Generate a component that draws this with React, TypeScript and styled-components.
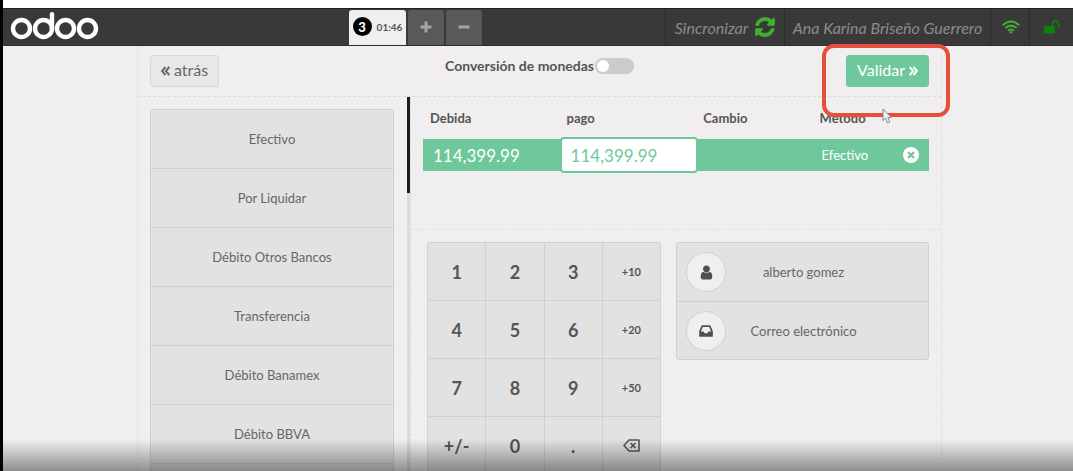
import React, { useState } from "react";
import styled, { createGlobalStyle, css } from "styled-components";

const green = "#6ec89b";
const line = "#d0d0d0";
const cell = "#e2e2e2";
const paper = "#f0eeef";

const GlobalStyle = createGlobalStyle`
  * { box-sizing: border-box; }
  body { margin: 0; background: ${paper}; color: #555555; font-family: Lato, "Open Sans", sans-serif; }
  button, input { font-family: inherit; color: inherit; margin: 0; }
  button { cursor: pointer; }
`;

const Screen = styled.div`
  position: relative;
  display: flex;
  flex-direction: column;
  height: 100vh;
  overflow: hidden;
  padding-top: 8px;
  border-left: 3px solid #000000;
  background: linear-gradient(#ffffff 8px, ${paper} 8px);
`;

const TopBar = styled.header`
  display: flex;
  flex: 0 0 37px;
  background: #393939;
  border-top: 1px solid #222222;
  border-bottom: 1px solid #2c2c2c;
`;

const Brand = styled.div`
  flex: 0 0 346px;
  padding: 2px 0 0 7px;
`;

const Tabs = styled.nav`
  display: flex;
  flex: 1;
  gap: 2px;
  padding-top: 1px;
`;

const Tab = styled.button<{ $active?: boolean }>`
  display: flex;
  align-items: center;
  justify-content: center;
  gap: 5px;
  height: 35px;
  padding: 0 0 2px;
  border: 0;
  border-radius: 3px 3px 0 0;
  width: 36px;
  background: #595959;
  color: #a5a5a5;
  ${(p) =>
    p.$active &&
    css`
      width: 57px;
      background: ${paper};
      color: #555555;
      font-size: 10px;
      font-weight: 700;
    `}
`;

const TabNumber = styled.span`
  display: grid;
  place-items: center;
  width: 19px;
  height: 19px;
  border-radius: 50%;
  background: #000000;
  color: #ffffff;
  font-size: 13px;
  font-weight: 900;
`;

const Status = styled.div<{ $width: number }>`
  display: flex;
  align-items: center;
  justify-content: center;
  gap: 7px;
  flex: 0 0 ${(p) => p.$width}px;
  border-left: 1px solid #2c2c2c;
  color: #8c8c8c;
  font-size: 16px;
  font-style: italic;
  white-space: nowrap;
`;

const Body = styled.div`
  display: flex;
  justify-content: center;
  flex: 1;
  min-height: 0;
  padding-left: 3px;
`;

const Content = styled.main`
  display: flex;
  flex-direction: column;
  width: 100%;
  max-width: 805px;
  border: 1px dashed #e2e0e1;
  border-width: 0 1px;
`;

const Actions = styled.div`
  display: grid;
  grid-template-columns: 1fr auto 1fr;
  align-items: start;
  flex: 0 0 51px;
  padding: 9px 12px 0;
  border-bottom: 1px dashed #dddbdc;
`;

const ActionButton = styled.button<{ $primary?: boolean }>`
  display: flex;
  align-items: center;
  justify-content: center;
  gap: 4px;
  height: 32px;
  padding: 0 10px;
  border: 1px solid ${(p) => (p.$primary ? green : "#d8d8d8")};
  border-radius: 3px;
  background: ${(p) => (p.$primary ? green : "#e8e8e8")};
  color: ${(p) => (p.$primary ? "#ffffff" : "#666666")};
  font-size: 16px;
  line-height: 18px;
  padding-bottom: 2px;
`;

const Start = styled.div`
  display: flex;
`;

const Highlighted = styled.div`
  position: relative;
  justify-self: end;
`;

const Marker = styled.div`
  position: absolute;
  inset: -11px -21px -30px -24px;
  border: 4px solid #e5503c;
  border-radius: 12px;
  pointer-events: none;
  z-index: 1;
`;

const Pointer = styled.svg`
  position: absolute;
  left: 36px;
  top: 53px;
  z-index: 2;
`;

const Conversion = styled.label`
  display: flex;
  align-items: center;
  gap: 1px;
  padding-top: 2px;
  font-size: 14px;
  line-height: 18px;
  font-weight: 700;
`;

const Switch = styled.input`
  appearance: none;
  display: flex;
  width: 39px;
  height: 16px;
  padding: 2px;
  border-radius: 8px;
  background: #cbcbcb;
  &::before {
    content: "";
    width: 12px;
    height: 12px;
    border-radius: 50%;
    background: #ffffff;
  }
  &:checked {
    justify-content: flex-end;
    background: ${green};
  }
`;

const Panes = styled.div`
  display: flex;
  flex: 1;
  min-height: 0;
`;

const Methods = styled.div`
  flex: 0 0 269px;
  overflow: hidden;
  padding: 12px 13px 0 12px;
`;

const MethodList = styled.div`
  display: flex;
  flex-direction: column;
  border: 1px solid ${line};
  border-radius: 3px 3px 0 0;
`;

const Method = styled.button`
  height: 59px;
  flex: none;
  padding: 0;
  border: 0;
  border-bottom: 1px solid ${line};
  background: ${cell};
  color: #666666;
  font-size: 13px;
`;

const ScrollTrack = styled.div`
  flex: 0 0 3px;
  background: #dcdadb;
`;

const ScrollThumb = styled.div`
  height: 96px;
  background: #1c1c1c;
`;

const Details = styled.div`
  flex: 1;
  min-width: 0;
  border-left: 1px dashed #dddbdc;
`;

const Summary = styled.section`
  height: 133px;
  padding: 12px 12px 0;
  border-bottom: 1px dashed #e4e2e3;
`;

const Lines = styled.table`
  width: 100%;
  table-layout: fixed;
  border-collapse: collapse;
  th {
    height: 30px;
    padding: 1px 0 0 7px;
    font-size: 13px;
    line-height: 16px;
    font-weight: 700;
    text-align: left;
    vertical-align: top;
  }
  td {
    height: 32px;
    padding: 0;
    background: ${green};
    color: #ffffff;
    font-size: 13px;
  }
  td:first-child {
    padding-left: 10px;
    font-size: 17px;
  }
  td:nth-child(4) {
    padding-left: 9px;
  }
`;

const Amount = styled.input`
  display: block;
  position: relative;
  width: calc(100% + 2px);
  height: 36px;
  margin: -2px 0;
  padding: 0 9px;
  border: 2px solid ${green};
  border-radius: 4px;
  background: #ffffff;
  color: ${green};
  font-size: 17px;
  outline: 0;
`;

const Remove = styled.button`
  display: grid;
  place-items: center;
  width: 16px;
  height: 16px;
  margin: 0 auto;
  padding: 0;
  border: 0;
  border-radius: 50%;
  background: #ffffff;
  color: ${green};
`;

const Entry = styled.section`
  display: flex;
  align-items: flex-start;
  gap: 15px;
  padding: 12px 12px 0 16px;
`;

const Numpad = styled.div`
  display: grid;
  grid-template-columns: repeat(4, 1fr);
  flex: 0 0 234px;
  border: 1px solid ${line};
  border-width: 1px 0 0 1px;
  border-radius: 3px;
`;

const Key = styled.button<{ $small?: boolean }>`
  display: grid;
  place-items: center;
  height: 58px;
  padding: 0;
  border: 1px solid ${line};
  border-width: 0 1px 1px 0;
  background: ${cell};
  color: #555555;
  font-size: ${(p) => (p.$small ? 11 : 18)}px;
  font-weight: 700;
`;

const Customer = styled.div`
  flex: 1;
  border: 1px solid ${line};
  border-radius: 3px;
  background: ${cell};
`;

const CustomerButton = styled.button`
  display: flex;
  align-items: center;
  width: 100%;
  height: 58px;
  padding: 0 9px;
  border: 0;
  background: transparent;
  color: #666666;
  font-size: 13px;
  & + & {
    border-top: 1px solid ${line};
  }
`;

const Badge = styled.span`
  display: grid;
  place-items: center;
  flex: 0 0 40px;
  height: 40px;
  border: 1px solid #d2d2d2;
  border-radius: 50%;
  background: ${paper};
  color: #505050;
`;

const CustomerText = styled.span`
  flex: 1;
  padding-right: 38px;
`;

const Shade = styled.div`
  position: absolute;
  inset: auto 0 0 0;
  height: 32px;
  background: linear-gradient(rgba(0, 0, 0, 0), rgba(0, 0, 0, 0.4));
  pointer-events: none;
`;

const Logo = () => (
  <svg width="90" height="30" viewBox="0 0 90 30" fill="none" stroke="#ffffff" strokeWidth="4.4" role="img" aria-label="odoo">
    <circle cx="11.5" cy="17.5" r="8.5" />
    <circle cx="33.5" cy="17.5" r="8.5" />
    <circle cx="55.5" cy="17.5" r="8.5" />
    <circle cx="77.5" cy="17.5" r="8.5" />
    <path d="M42 17.5V3.2" strokeLinecap="round" />
  </svg>
);

const Chevrons = ({ right }: { right?: boolean }) => (
  <svg width="9" height="12" viewBox="0 -2 9 12" fill="none" stroke="currentColor" strokeWidth="1.9" aria-hidden="true">
    <path d={right ? "M.7 1L4.2 5L.7 9M4.5 1L8 5L4.5 9" : "M4.5 1L1 5L4.5 9M8.3 1L4.8 5L8.3 9"} />
  </svg>
);

const Refresh = () => (
  <svg width="20" height="20" viewBox="-30 -30 1596 1596" fill="#43b02f" stroke="#43b02f" strokeWidth="60" aria-hidden="true">
    <path d="M1511 928q0 5-1 7-64 268-268 434.5t-478 166.5q-146 0-282.5-55t-243.5-157l-129 129q-19 19-45 19t-45-19-19-45v-448q0-26 19-45t45-19h448q26 0 45 19t19 45-19 45l-137 137q71 66 161 102t187 36q134 0 250-65t186-179q11-17 53-117 8-23 30-23h192q13 0 22.5 9.5t9.5 22.5zm25-800v448q0 26-19 45t-45 19h-448q-26 0-45-19t-19-45 19-45l138-138q-148-137-349-137-134 0-250 65t-186 179q-11 17-53 117-8 23-30 23h-199q-13 0-22.5-9.5t-9.5-22.5v-7q65-268 270-434.5t480-166.5q146 0 284 55.5t245 156.5l130-129q19-19 45-19t45 19 19 45z" />
  </svg>
);

const Wifi = () => (
  <svg width="20" height="14" viewBox="-2 0 20 14" fill="none" stroke="#43b02f" strokeWidth="2.1" role="img" aria-label="Conectado">
    <path d="M.8 5.2Q9-2.2 17.2 5.2M3.4 8Q9 3.2 14.6 8M6 10.7Q9 8.3 12 10.7" />
    <path d="M7 11.9Q9 10.6 11 11.9L9 13.8Z" fill="#43b02f" stroke="none" />
  </svg>
);

const Unlock = () => (
  <svg width="16" height="14" viewBox="0 0 16 14" role="img" aria-label="Desbloqueado">
    <rect x="0" y="6" width="11" height="7.5" rx="1" fill="#0b800b" />
    <path d="M8.5 6.5V4.2a3 3 0 0 1 6 0V7" fill="none" stroke="#0b800b" strokeWidth="1.8" strokeLinecap="round" />
  </svg>
);

const Person = () => (
  <svg width="15" height="15" viewBox="128 64 1536 1664" fill="currentColor" aria-hidden="true">
    <path d="M1536 1399q0 109-62.5 187t-150.5 78h-854q-88 0-150.5-78t-62.5-187q0-85 8.5-160.5t31.5-152 58.5-131 94-89 134.5-34.5q131 128 313 128t313-128q76 0 134.5 34.5t94 89 58.5 131 31.5 152 8.5 160.5zm-256-887q0 159-112.5 271.5t-271.5 112.5-271.5-112.5-112.5-271.5 112.5-271.5 271.5-112.5 271.5 112.5 112.5 271.5z" />
  </svg>
);

const Inbox = () => (
  <svg width="16" height="16" viewBox="0 0 1792 1792" fill="currentColor" aria-hidden="true">
    <path d="M1151 960h316q-1-3-2.5-8t-2.5-8l-212-496h-708l-212 496q-1 2-2.5 8t-2.5 8h316l95 192h320zm513 30v482q0 26-19 45t-45 19h-1408q-26 0-45-19t-19-45v-482q0-62 25-123l238-552q10-25 36.5-42t52.5-17h832q26 0 52.5 17t36.5 42l238 552q25 61 25 123z" />
  </svg>
);

const Backspace = () => (
  <svg width="17" height="13" viewBox="0 0 17 13" fill="none" stroke="currentColor" aria-hidden="true">
    <path d="M6 1H16V12H6L1 6.5Z" strokeWidth="1.6" strokeLinejoin="round" />
    <path d="M7.5 4L12.5 9M12.5 4L7.5 9" strokeWidth="1.7" />
  </svg>
);

const methods = [
  "Efectivo",
  "Por Liquidar",
  "Débito Otros Bancos",
  "Transferencia",
  "Débito Banamex",
  "Débito BBVA",
];

const keys = ["1", "2", "3", "+10", "4", "5", "6", "+20", "7", "8", "9", "+50", "+/-", "0", "."];

export default function App() {
  const [amount, setAmount] = useState("114,399.99");

  return (
    <Screen>
      <GlobalStyle />
      <TopBar>
        <Brand>
          <Logo />
        </Brand>
        <Tabs aria-label="Pedidos">
          <Tab $active>
            <TabNumber>3</TabNumber>
            01:46
          </Tab>
          <Tab aria-label="Nuevo pedido">
            <svg width="12" height="12" viewBox="0 0 12 12" fill="none" stroke="currentColor" strokeWidth="3">
              <path d="M6 .5V11.5M.5 6H11.5" />
            </svg>
          </Tab>
          <Tab aria-label="Eliminar pedido">
            <svg width="12" height="12" viewBox="0 0 12 12" fill="none" stroke="currentColor" strokeWidth="3">
              <path d="M.5 6H11.5" />
            </svg>
          </Tab>
        </Tabs>
        <Status $width={119}>
          Sincronizar
          <Refresh />
        </Status>
        <Status $width={206}>Ana Karina Briseño Guerrero</Status>
        <Status $width={39}>
          <Wifi />
        </Status>
        <Status $width={44}>
          <Unlock />
        </Status>
      </TopBar>

      <Body>
        <Content>
          <Actions>
            <Start>
              <ActionButton>
                <Chevrons />
                atrás
              </ActionButton>
            </Start>
            <Conversion>
              Conversión de monedas
              <Switch type="checkbox" role="switch" />
            </Conversion>
            <Highlighted>
              <ActionButton $primary>
                Validar
                <Chevrons right />
              </ActionButton>
              <Marker />
              <Pointer width="11" height="17" viewBox="0 0 11 17" fill="#f4f2f3" stroke="#8a8a8a" aria-hidden="true">
                <path d="M1 1V12.5L3.6 10.2L5.6 15L7.8 14L5.8 9.5H9.3Z" />
              </Pointer>
            </Highlighted>
          </Actions>

          <Panes>
            <Methods>
              <MethodList>
                {methods.map((name) => (
                  <Method key={name}>{name}</Method>
                ))}
                <Method aria-label="Otro método" />
              </MethodList>
            </Methods>
            <ScrollTrack>
              <ScrollThumb />
            </ScrollTrack>
            <Details>
              <Summary>
                <Lines>
                  <colgroup>
                    <col width="27%" />
                    <col width="27%" />
                    <col width="23%" />
                    <col width="16%" />
                    <col width="7%" />
                  </colgroup>
                  <thead>
                    <tr>
                      <th>Debida</th>
                      <th>pago</th>
                      <th>Cambio</th>
                      <th colSpan={2}>Método</th>
                    </tr>
                  </thead>
                  <tbody>
                    <tr>
                      <td>114,399.99</td>
                      <td>
                        <Amount aria-label="pago" value={amount} onChange={(e) => setAmount(e.target.value)} />
                      </td>
                      <td />
                      <td>Efectivo</td>
                      <td>
                        <Remove aria-label="Eliminar pago">
                          <svg width="8" height="8" viewBox="0 0 8 8" fill="none" stroke="currentColor" strokeWidth="2.4">
                            <path d="M1 1L7 7M7 1L1 7" />
                          </svg>
                        </Remove>
                      </td>
                    </tr>
                  </tbody>
                </Lines>
              </Summary>
              <Entry>
                <Numpad>
                  {keys.map((k) => (
                    <Key key={k} $small={/^\+\d/.test(k)}>
                      {k}
                    </Key>
                  ))}
                  <Key aria-label="Borrar">
                    <Backspace />
                  </Key>
                </Numpad>
                <Customer>
                  <CustomerButton>
                    <Badge>
                      <Person />
                    </Badge>
                    <CustomerText>alberto gomez</CustomerText>
                  </CustomerButton>
                  <CustomerButton>
                    <Badge>
                      <Inbox />
                    </Badge>
                    <CustomerText>Correo electrónico</CustomerText>
                  </CustomerButton>
                </Customer>
              </Entry>
            </Details>
          </Panes>
        </Content>
      </Body>
      <Shade />
    </Screen>
  );
}
